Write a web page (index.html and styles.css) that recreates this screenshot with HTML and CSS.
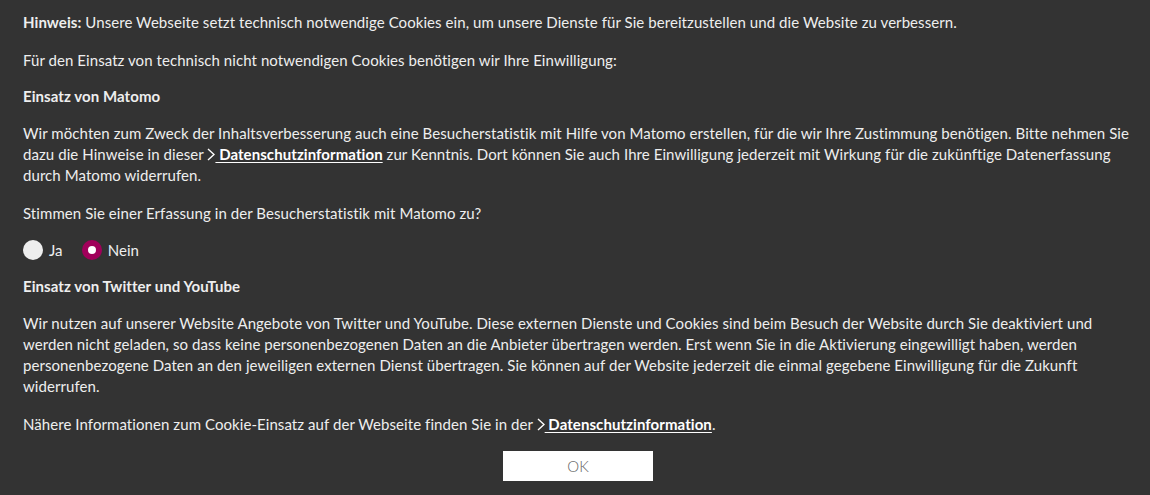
FILE: index.html
```html
<!DOCTYPE html>
<html lang="de">
<head>
<meta charset="utf-8">
<link rel="stylesheet" href="styles.css">
</head>
<body>
<div class="banner">
  <p><strong>Hinweis:</strong> Unsere Webseite setzt technisch notwendige Cookies ein, um unsere Dienste für Sie bereitzustellen und die Website zu verbessern.</p>
  <p>Für den Einsatz von technisch nicht notwendigen Cookies benötigen wir Ihre Einwilligung:</p>
  <h3>Einsatz von Matomo</h3>
  <p>Wir möchten zum Zweck der Inhaltsverbesserung auch eine Besucherstatistik mit Hilfe von Matomo erstellen, für die wir Ihre Zustimmung benötigen. Bitte nehmen Sie dazu die Hinweise in dieser <a class="link" href="#"><svg class="chev" viewBox="0 0 8 13" width="8" height="13"><path d="M1 1 L7 6.5 L1 12" fill="none" stroke="#ffffff" stroke-width="1.4"/></svg> Datenschutzinformation</a> zur Kenntnis. Dort können Sie auch Ihre Einwilligung jederzeit mit Wirkung für die zukünftige Datenerfassung durch Matomo widerrufen.</p>
  <p class="question">Stimmen Sie einer Erfassung in der Besucherstatistik mit Matomo zu?</p>
  <div class="radios">
    <label class="radio"><span class="dot"></span>Ja</label>
    <label class="radio"><span class="dot checked"></span>Nein</label>
  </div>
  <h3>Einsatz von Twitter und YouTube</h3>
  <p>Wir nutzen auf unserer Website Angebote von Twitter und YouTube. Diese externen Dienste und Cookies sind beim Besuch der Website durch Sie deaktiviert und werden nicht geladen, so dass keine personenbezogenen Daten an die Anbieter übertragen werden. Erst wenn Sie in die Aktivierung eingewilligt haben, werden personenbezogene Daten an den jeweiligen externen Dienst übertragen. Sie können auf der Website jederzeit die einmal gegebene Einwilligung für die Zukunft widerrufen.</p>
  <p>Nähere Informationen zum Cookie-Einsatz auf der Webseite finden Sie in der <a class="link" href="#"><svg class="chev" viewBox="0 0 8 13" width="8" height="13"><path d="M1 1 L7 6.5 L1 12" fill="none" stroke="#ffffff" stroke-width="1.4"/></svg> Datenschutzinformation</a>.</p>
  <div class="actions"><button class="ok">OK</button></div>
</div>
</body>
</html>
```
FILE: styles.css
```css
html, body {
  margin: 0;
  padding: 0;
  background: #333333;
}
.banner {
  padding: 12px 17px 0 23px;
  font-family: "Lato", "Open Sans", sans-serif;
  font-size: 15px;
  line-height: 21px;
  letter-spacing: 0.07px;
  color: #eeeeee;
}
.banner p {
  margin: 0 0 17px 0;
}
.banner p.question {
  margin-bottom: 14px;
}
.banner strong, .banner h3 {
  font-weight: 700;
}
.banner h3 {
  font-size: 15px;
  margin: -2px 0 16px 0;
  line-height: 21px;
}
.link {
  color: #ffffff;
  font-weight: 700;
  text-decoration: underline;
  text-underline-offset: 2px;
}
.chev {
  display: inline-block;
  vertical-align: -1px;
}
.radios {
  display: flex;
  gap: 19px;
  align-items: center;
  height: 24px;
  margin: 2px 0 16px 0;
}
.radio {
  display: flex;
  align-items: center;
  gap: 6px;
}
.dot {
  width: 20px;
  height: 20px;
  border-radius: 50%;
  background: #eeeeee;
  box-sizing: border-box;
}
.dot.checked {
  background: #ffffff;
  border: 6px solid #a0005a;
}
.actions {
  display: flex;
  justify-content: center;
  margin-top: -1px;
}
.ok {
  width: 150px;
  height: 30px;
  background: #ffffff;
  border: none;
  color: #666666;
  font-family: "Lato", sans-serif;
  font-weight: 300;
  font-size: 15px;
  cursor: pointer;
}
```
